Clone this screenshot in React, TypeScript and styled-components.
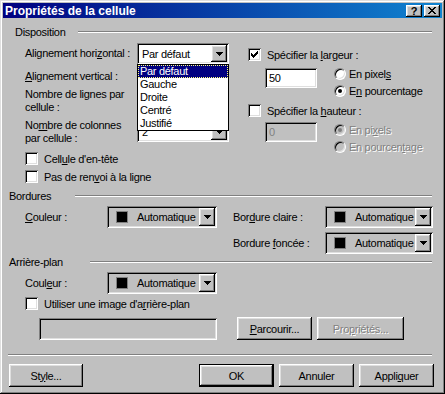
import React from 'react';
import styled, { createGlobalStyle, css } from 'styled-components';

const GlobalStyle = createGlobalStyle`
  html, body {
    margin: 0;
    padding: 0;
    background: #c0c0c0;
  }

  body {
    color: #000;
    font-family: "Liberation Sans", Arial, sans-serif;
    font-size: 11px;
    letter-spacing: -0.3px;
  }

  * {
    box-sizing: border-box;
  }
`;

const sunken = css`
  box-shadow: inset 1px 1px #808080, inset -1px -1px #fff, inset 2px 2px #000, inset -2px -2px #dfdfdf;
`;

const raised = css`
  box-shadow: inset -1px -1px #000, inset 1px 1px #fff, inset -2px -2px #808080, inset 2px 2px #dfdfdf;
`;

const disabledText = css`
  color: #808080;
  text-shadow: 1px 1px #fff;
`;

const Window = styled.div`
  background: #c0c0c0;
  box-shadow: inset -1px -1px #000, inset 1px 1px #dfdfdf, inset -2px -2px #808080, inset 2px 2px #fff;
  display: flex;
  flex-direction: column;
  height: 394px;
  padding: 3px;
  width: 445px;
`;

const TitleBar = styled.div`
  align-items: center;
  background: linear-gradient(to right, #000080, #1084d0);
  display: flex;
  gap: 2px;
  height: 15px;
  padding: 0 2px;
`;

const Title = styled.span`
  color: #fff;
  flex: 1;
  font-size: 12px;
  font-weight: bold;
  letter-spacing: 0;
`;

const CaptionButton = styled.div`
  ${raised};
  align-items: center;
  background: #c0c0c0;
  display: flex;
  font-size: 11px;
  font-weight: bold;
  height: 12px;
  justify-content: center;
  letter-spacing: 0;
  width: 16px;
`;

const Body = styled.div`
  display: flex;
  flex: 1;
  flex-direction: column;
  padding: 0 10px 0 6px;
`;

const SectionHeader = styled.div<{ $indent: number; $top: number }>`
  align-items: center;
  display: flex;
  height: 14px;
  margin-top: ${(p) => p.$top}px;
  padding-left: ${(p) => p.$indent}px;
`;

const SectionLabel = styled.span<{ $width: number }>`
  width: ${(p) => p.$width}px;
`;

const Rule = styled.div`
  border-bottom: 1px solid #fff;
  border-top: 1px solid #808080;
  flex: 1;
`;

const DispositionBlock = styled.div`
  display: flex;
  margin-top: 4px;
`;

const LeftColumn = styled.div`
  display: flex;
  flex-direction: column;
  margin-left: 16px;
  width: 204px;
`;

const RightColumn = styled.div`
  display: flex;
  flex-direction: column;
  margin-left: 19px;
`;

const FieldRow = styled.div<{ $height: number }>`
  align-items: flex-start;
  display: flex;
  height: ${(p) => p.$height}px;
`;

const FieldLabel = styled.div<{ $pad: number }>`
  line-height: 13px;
  padding-top: ${(p) => p.$pad}px;
  width: 112px;
`;

const Select = styled.div<{ $offset: number }>`
  ${sunken};
  align-items: center;
  background: #fff;
  display: flex;
  height: 21px;
  margin-top: ${(p) => p.$offset}px;
  padding: 2px;
  position: relative;
  width: 92px;
`;

const SelectValue = styled.span`
  flex: 1;
  padding-left: 3px;
`;

const DropButton = styled.div<{ $height: number }>`
  ${raised};
  align-items: center;
  background: #c0c0c0;
  display: flex;
  height: ${(p) => p.$height}px;
  justify-content: center;
  width: 16px;
`;

const DropList = styled.ul`
  background: #fff;
  border: 1px solid #000;
  left: 0;
  list-style: none;
  margin: 0;
  padding: 0;
  position: absolute;
  top: 100%;
  width: 100%;
  z-index: 5;
`;

const DropItem = styled.li<{ $active?: boolean }>`
  height: 13px;
  line-height: 13px;
  padding-left: 2px;
  ${(p) => p.$active && css`
    background: #000080;
    color: #fff;
    outline: 1px dotted #ffff80;
    outline-offset: -1px;
  `}
`;

const CheckRow = styled.div<{ $top: number; $indent?: number; $disabled?: boolean }>`
  align-items: center;
  display: flex;
  gap: 6px;
  height: 13px;
  margin-left: ${(p) => p.$indent ?? 0}px;
  margin-top: ${(p) => p.$top}px;
  ${(p) => p.$disabled && disabledText};
`;

const CheckBox = styled.span`
  ${sunken};
  align-items: center;
  background: #fff;
  display: flex;
  flex-shrink: 0;
  height: 13px;
  justify-content: center;
  width: 13px;
`;

const SizeBlock = styled.div`
  display: flex;
  margin-left: 17px;
  margin-top: 4px;
`;

const TextInput = styled.div<{ $width: number; $height: number; $offset?: number; $disabled?: boolean }>`
  ${sunken};
  background: ${(p) => (p.$disabled ? '#c0c0c0' : '#fff')};
  height: ${(p) => p.$height}px;
  line-height: ${(p) => p.$height}px;
  margin-top: ${(p) => p.$offset ?? 0}px;
  padding: 0 4px;
  width: ${(p) => p.$width}px;
  ${(p) => p.$disabled && css`color: #808080;`};
`;

const RadioGroup = styled.div`
  display: flex;
  flex-direction: column;
  margin-left: 17px;
`;

const RadioRow = styled.div<{ $disabled?: boolean }>`
  align-items: center;
  display: flex;
  gap: 3px;
  height: 17px;
  ${(p) => p.$disabled && disabledText};
`;

const Radio = styled.span<{ $disabled?: boolean }>`
  align-items: center;
  background: ${(p) => (p.$disabled ? '#c0c0c0' : '#fff')};
  border: 1px solid;
  border-color: #808080 #fff #fff #808080;
  border-radius: 50%;
  box-shadow: inset 1px 1px #000, inset -1px -1px #dfdfdf;
  display: flex;
  flex-shrink: 0;
  height: 12px;
  justify-content: center;
  text-shadow: none;
  width: 12px;
`;

const RadioDot = styled.span<{ $disabled?: boolean }>`
  background: ${(p) => (p.$disabled ? '#808080' : '#000')};
  border-radius: 50%;
  height: 4px;
  width: 4px;
`;

const ColorGrid = styled.div`
  align-items: center;
  display: grid;
  grid-template-columns: 82px 126px 92px 108px;
  margin-left: 16px;
  margin-top: 3px;
  row-gap: 4px;
`;

const ColorRow = styled.div`
  align-items: center;
  display: flex;
  margin-left: 16px;
  margin-top: 3px;
`;

const ColorLabel = styled.span<{ $column?: number }>`
  grid-column: ${(p) => p.$column ?? 'auto'};
  width: 82px;
`;

const ColorPicker = styled.div<{ $width: number }>`
  ${sunken};
  align-items: center;
  background: #c0c0c0;
  display: flex;
  height: 22px;
  padding: 2px;
  width: ${(p) => p.$width}px;
`;

const Swatch = styled.span`
  background: #000;
  border: 1px solid #808080;
  height: 12px;
  margin-left: 7px;
  width: 12px;
`;

const PickerText = styled.span`
  flex: 1;
  margin-left: 9px;
`;

const BrowseRow = styled.div`
  display: flex;
  margin-left: 30px;
  margin-top: 7px;
`;

const Button = styled.button<{ $width: number; $gap?: number; $primary?: boolean }>`
  ${raised};
  background: #c0c0c0;
  border: none;
  color: #000;
  font: inherit;
  height: 23px;
  letter-spacing: inherit;
  margin-left: ${(p) => p.$gap ?? 0}px;
  padding: 0;
  width: ${(p) => p.$width}px;
  ${(p) => p.$primary && css`
    box-shadow: inset 0 0 0 1px #000, inset -2px -2px #000, inset 2px 2px #fff, inset -3px -3px #808080, inset 3px 3px #dfdfdf;
  `}
  &:disabled {
    ${disabledText};
  }
`;

const Separator = styled.div`
  border-bottom: 1px solid #fff;
  border-top: 1px solid #808080;
  margin-left: -1px;
  margin-top: 14px;
`;

const Footer = styled.div`
  display: flex;
  margin-right: -2px;
  margin-top: 8px;
`;

const Spacer = styled.div`
  flex: 1;
`;

const Key = styled.u`
  text-decoration: underline;
  text-underline-offset: 1px;
`;

const Arrow = () => (
  <svg width="7" height="4" viewBox="0 0 7 4" shapeRendering="crispEdges">
    <path d="M0 0h7v1h-1v1h-1v1h-1v1h-1v-1h-1v-1h-1v-1h-1z" fill="#000" />
  </svg>
);

const CheckMark = () => (
  <svg width="7" height="7" viewBox="0 0 7 7" shapeRendering="crispEdges">
    <path d="M6 0h1v3h-1v1h-1v1h-1v1h-1v1h-1v-1h-1v-1h-1v-3h1v1h1v1h1v-1h1v-1h1z" fill="#000" />
  </svg>
);

const CloseGlyph = () => (
  <svg width="8" height="7" viewBox="0 0 8 7" shapeRendering="crispEdges">
    <path d="M0 0h2v1h1v1h2v-1h1v-1h2v1h-1v1h-1v1h-1v1h1v1h1v1h1v1h-2v-1h-1v-1h-2v1h-1v1h-2v-1h1v-1h1v-1h1v-1h-1v-1h-1v-1h-1z" fill="#000" />
  </svg>
);

const ComboBox = ({ value, offset, children }: { value?: string; offset: number; children?: React.ReactNode }) => (
  <Select $offset={offset}>
    <SelectValue>{value}</SelectValue>
    <DropButton $height={17}><Arrow /></DropButton>
    {children}
  </Select>
);

const ColorCombo = ({ width }: { width: number }) => (
  <ColorPicker $width={width}>
    <Swatch />
    <PickerText>Automatique</PickerText>
    <DropButton $height={18}><Arrow /></DropButton>
  </ColorPicker>
);

const alignments = ['Par défaut', 'Gauche', 'Droite', 'Centré', 'Justifié'];

const App = () => {
  return (
    <>
      <GlobalStyle />
      <Window>
        <TitleBar>
          <Title>Propriétés de la cellule</Title>
          <CaptionButton>?</CaptionButton>
          <CaptionButton><CloseGlyph /></CaptionButton>
        </TitleBar>
        <Body>
          <SectionHeader $indent={6} $top={7}>
            <SectionLabel $width={63}>Disposition</SectionLabel>
            <Rule />
          </SectionHeader>
          <DispositionBlock>
            <LeftColumn>
              <FieldRow $height={23}>
                <FieldLabel $pad={4}>Alignement hori<Key>z</Key>ontal :</FieldLabel>
                <ComboBox value="Par défaut" offset={0}>
                  <DropList>
                    {alignments.map((item, index) => (
                      <DropItem key={item} $active={index === 0}>{item}</DropItem>
                    ))}
                  </DropList>
                </ComboBox>
              </FieldRow>
              {/* these two combos sit under the open list, so their values are not visible */}
              <FieldRow $height={22}>
                <FieldLabel $pad={4}><Key>A</Key>lignement vertical :</FieldLabel>
                <ComboBox offset={1} />
              </FieldRow>
              <FieldRow $height={31}>
                <FieldLabel $pad={0}>Nombre de lignes par<br />cellule :</FieldLabel>
                <ComboBox offset={3} />
              </FieldRow>
              <FieldRow $height={26}>
                <FieldLabel $pad={0}>No<Key>m</Key>bre de colonnes<br />par cellule :</FieldLabel>
                <ComboBox value="2" offset={2} />
              </FieldRow>
              <CheckRow $top={7}>
                <CheckBox />
                <span>Cell<Key>u</Key>le d'en-tête</span>
              </CheckRow>
              <CheckRow $top={5}>
                <CheckBox />
                <span>Pas de ren<Key>v</Key>oi à la ligne</span>
              </CheckRow>
            </LeftColumn>
            <RightColumn>
              <CheckRow $top={5}>
                <CheckBox><CheckMark /></CheckBox>
                <span>Spécifier la <Key>l</Key>argeur :</span>
              </CheckRow>
              <SizeBlock>
                <TextInput $width={52} $height={20} $offset={3}>50</TextInput>
                <RadioGroup>
                  <RadioRow>
                    <Radio />
                    <span>En pixel<Key>s</Key></span>
                  </RadioRow>
                  <RadioRow>
                    <Radio><RadioDot /></Radio>
                    <span>E<Key>n</Key> pourcentage</span>
                  </RadioRow>
                </RadioGroup>
              </SizeBlock>
              <CheckRow $top={5}>
                <CheckBox />
                <span>Spécifier la <Key>h</Key>auteur :</span>
              </CheckRow>
              <SizeBlock>
                <TextInput $width={52} $height={20} $offset={1} $disabled>0</TextInput>
                <RadioGroup>
                  <RadioRow $disabled>
                    <Radio $disabled><RadioDot $disabled /></Radio>
                    <span>En pi<Key>x</Key>els</span>
                  </RadioRow>
                  <RadioRow $disabled>
                    <Radio $disabled />
                    <span>En pourcen<Key>t</Key>age</span>
                  </RadioRow>
                </RadioGroup>
              </SizeBlock>
            </RightColumn>
          </DispositionBlock>

          <SectionHeader $indent={0} $top={6}>
            <SectionLabel $width={66}>Bordures</SectionLabel>
            <Rule />
          </SectionHeader>
          <ColorGrid>
            <ColorLabel><Key>C</Key>ouleur :</ColorLabel>
            <ColorCombo width={110} />
            <ColorLabel>Bor<Key>d</Key>ure claire :</ColorLabel>
            <ColorCombo width={108} />
            <ColorLabel $column={3}>Bordure <Key>f</Key>oncée :</ColorLabel>
            <ColorCombo width={108} />
          </ColorGrid>

          <SectionHeader $indent={0} $top={1}>
            <SectionLabel $width={81}>Arrière-plan</SectionLabel>
            <Rule />
          </SectionHeader>
          <ColorRow>
            <ColorLabel>Coul<Key>e</Key>ur :</ColorLabel>
            <ColorCombo width={110} />
          </ColorRow>
          <CheckRow $top={3} $indent={16}>
            <CheckBox />
            <span>Utiliser une image d'a<Key>r</Key>rière-plan</span>
          </CheckRow>
          <BrowseRow>
            <TextInput $width={178} $height={22} $offset={1} $disabled />
            <Button $width={75} $gap={20}><Key>P</Key>arcourir...</Button>
            <Button $width={87} $gap={5} disabled>Pro<Key>p</Key>riétés...</Button>
          </BrowseRow>

          <Separator />
          <Footer>
            <Button $width={74}>St<Key>y</Key>le...</Button>
            <Spacer />
            <Button $width={75} $primary>OK</Button>
            <Button $width={75} $gap={5}>Annuler</Button>
            <Button $width={75} $gap={5}>Appli<Key>q</Key>uer</Button>
          </Footer>
        </Body>
      </Window>
    </>
  );
};

export default App;
